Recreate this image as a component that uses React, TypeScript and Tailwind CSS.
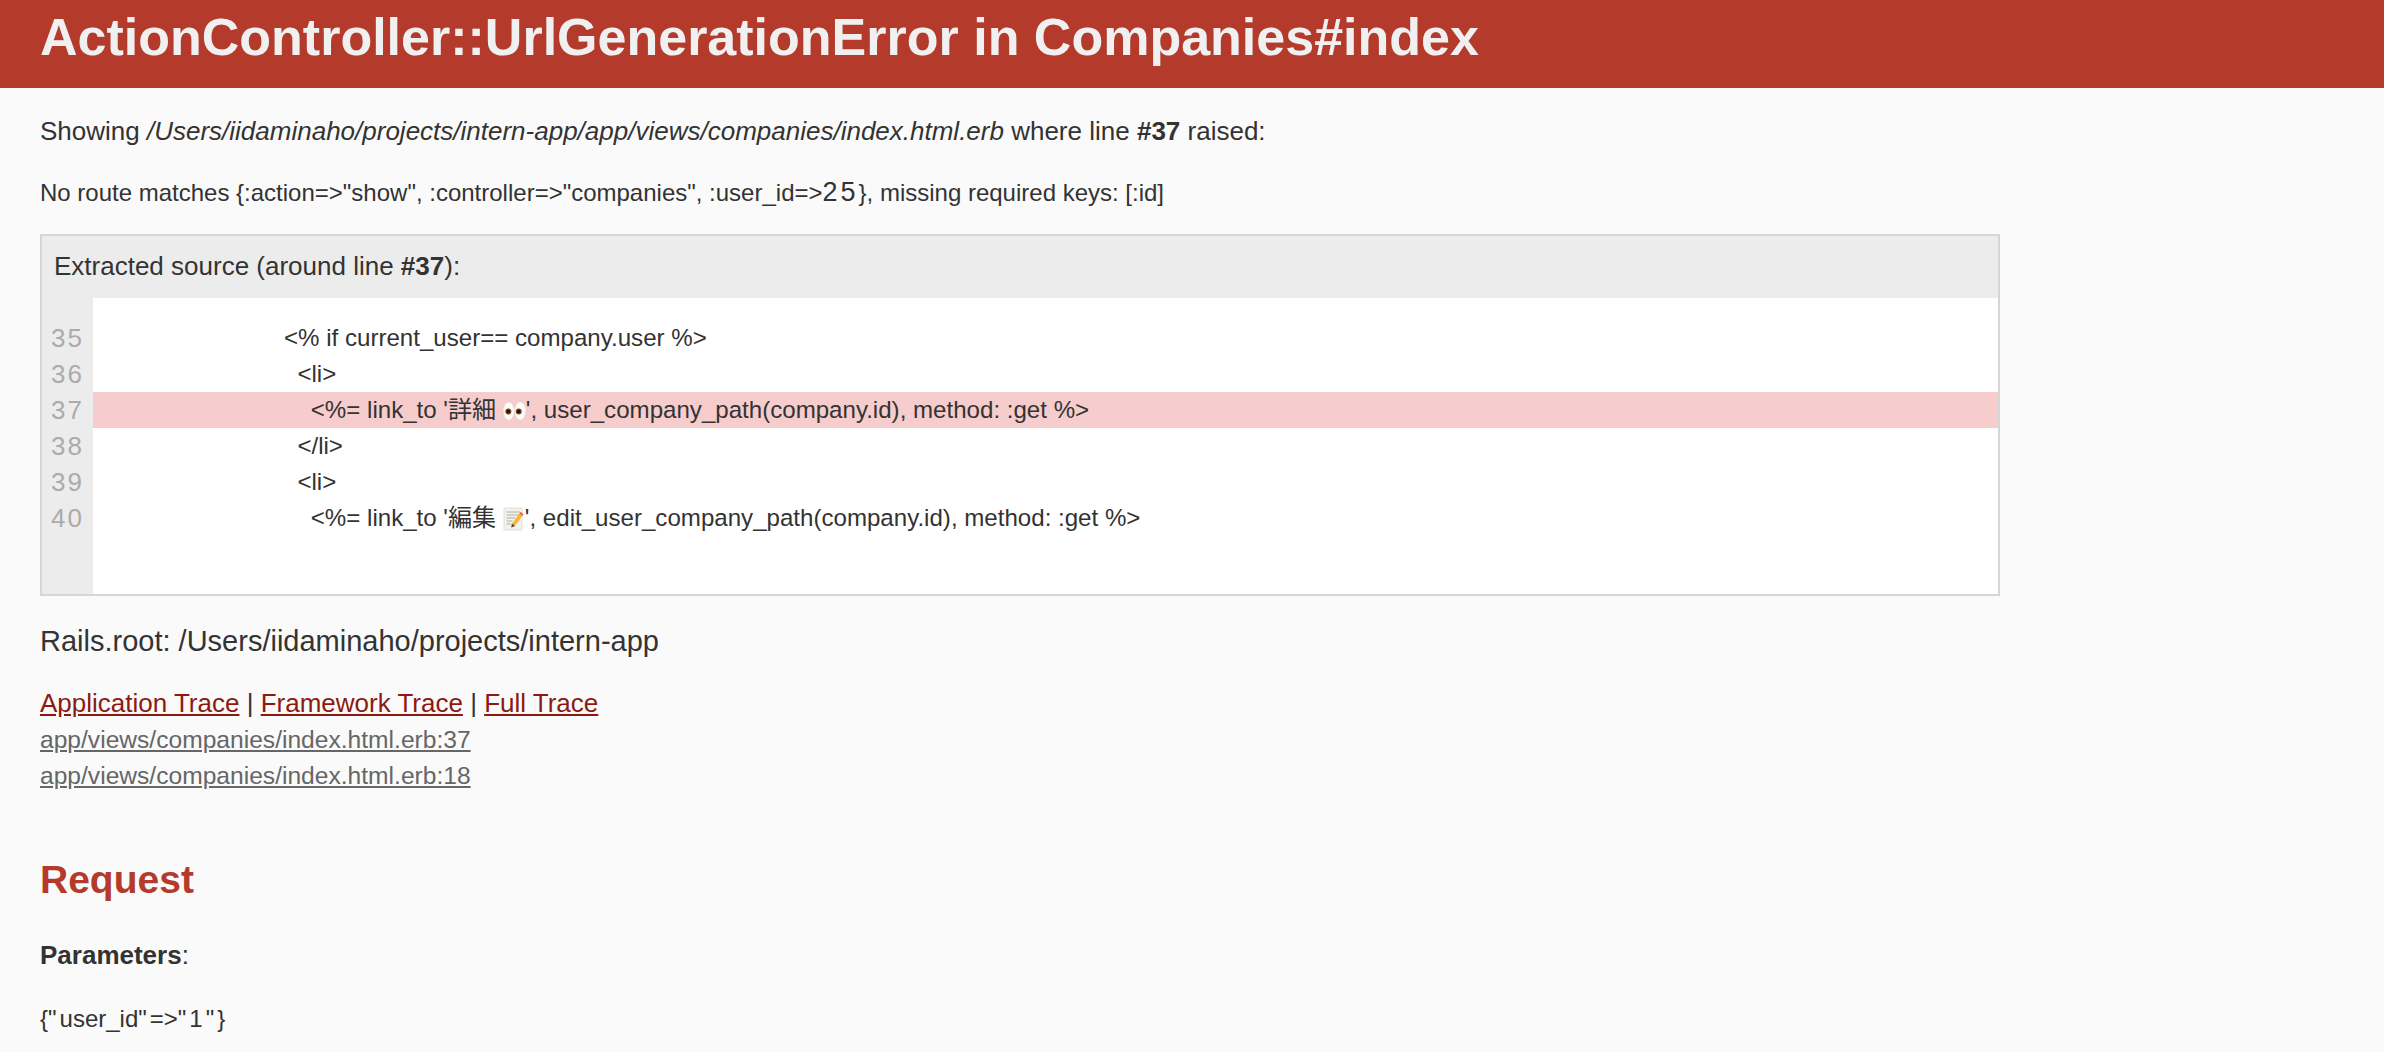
const sans = "font-['Liberation_Sans','Noto_Sans_CJK_JP',sans-serif]";

function EyesIcon() {
  return (
    <svg viewBox="0 0 24 20" className="inline-block w-[23px] h-[20px] align-[-3px]">
      <ellipse cx="6" cy="10" rx="5.7" ry="9.4" fill="#fbfbf9" stroke="#e0ded9" strokeWidth="0.5" />
      <ellipse cx="18" cy="10" rx="5.7" ry="9.4" fill="#fbfbf9" stroke="#e0ded9" strokeWidth="0.5" />
      <circle cx="5.6" cy="10.5" r="3.1" fill="#7a4516" />
      <circle cx="16.4" cy="10.5" r="3.1" fill="#7a4516" />
      <circle cx="5.6" cy="10.5" r="1.7" fill="#1d1009" />
      <circle cx="16.4" cy="10.5" r="1.7" fill="#1d1009" />
    </svg>
  );
}

function MemoIcon() {
  return (
    <svg viewBox="0 0 22 24" className="inline-block w-[22px] h-[24px] align-[-5px]">
      <rect x="1" y="1" width="18" height="22" fill="#f3f1ea" stroke="#d2cfc8" strokeWidth="0.6" />
      <path d="M3.5 5h13M3.5 8h13M3.5 11h9M3.5 14h6M3.5 17h5" stroke="#a9a9a9" strokeWidth="0.9" />
      <path d="M17.5 5l3 2.2L12 19l-3-2.2z" fill="#f5b82e" />
      <path d="M17.5 5l3 2.2-1.2 1.6-3-2.2z" fill="#e0695c" />
      <path d="M9 16.8l3 2.2-3.8 1.6z" fill="#4a3a2a" />
    </svg>
  );
}

const lines: { n: number; code: React.ReactNode; on?: boolean }[] = [
  { n: 35, code: "<% if current_user== company.user %>" },
  { n: 36, code: "  <li>" },
  {
    n: 37,
    on: true,
    code: (
      <>
        {"    <%= link_to '詳細 "}
        <EyesIcon />
        {"', user_company_path(company.id), method: :get %>"}
      </>
    ),
  },
  { n: 38, code: "  </li>" },
  { n: 39, code: "  <li>" },
  {
    n: 40,
    code: (
      <>
        {"    <%= link_to '編集 "}
        <MemoIcon />
        {"', edit_user_company_path(company.id), method: :get %>"}
      </>
    ),
  },
];

export default function App() {
  return (
    <div className={`${sans} min-h-screen h-[1052px] overflow-hidden bg-[#fafafa] text-[#333333]`}>
      <header className="h-[88px] bg-[#b43b2c] px-[40px] flex items-start">
        <h1 className="text-[52px] leading-[75px] font-bold text-[#f0f0f0]">
          ActionController::UrlGenerationError in Companies#index
        </h1>
      </header>

      <main className="px-[40px]">
        <p className="mt-[27px] text-[26px] leading-[32px]">
          Showing <i>/Users/iidaminaho/projects/intern-app/app/views/companies/index.html.erb</i> where line{" "}
          <b>#37</b> raised:
        </p>
        <p className="mt-[30px] text-[24px] leading-[32px] whitespace-pre">
          {'No route matches {:action=>"show", :controller=>"companies", :user_id=>'}
          <span className="text-[27px] leading-[24px] tracking-[3px]">25</span>
          {'}, missing required keys: [:id]'}
        </p>

        <section className="mt-[25px] w-[1960px] h-[362px] border-2 border-[#d6d6d6] flex flex-col">
          <div className="h-[62px] shrink-0 bg-[#ececec] px-[12px] text-[26px] leading-[60px]">
            Extracted source (around line <b>#37</b>):
          </div>
          <div className="flex-1 flex bg-white">
            <div className="w-[51px] shrink-0 bg-[#ececec] pt-[22px] pr-[9px] text-right text-[26px] leading-[36px] tracking-[2px] text-[#ababab]">
              {lines.map((l) => (
                <div key={l.n}>{l.n}</div>
              ))}
            </div>
            <div className="flex-1 pt-[22px] text-[24.1px] leading-[36px]">
              {lines.map((l) => (
                <div key={l.n} className={`pl-[191px] whitespace-pre h-[36px] ${l.on ? "bg-[#f7cccc]" : ""}`}>
                  {l.code}
                </div>
              ))}
            </div>
          </div>
        </section>

        <p className="mt-[27px] text-[29px] leading-[36px]">Rails.root: /Users/iidaminaho/projects/intern-app</p>

        <div className="mt-[26px] text-[26px] leading-[36px]">
          <a className="underline text-[#8c1a10]" href="#">Application Trace</a>
          {" | "}
          <a className="underline text-[#8c1a10]" href="#">Framework Trace</a>
          {" | "}
          <a className="underline text-[#8c1a10]" href="#">Full Trace</a>
        </div>
        <div className="mt-[1px] text-[24.6px] leading-[36px] text-[#666666]">
          <div><a className="underline" href="#">app/views/companies/index.html.erb:37</a></div>
          <div><a className="underline" href="#">app/views/companies/index.html.erb:18</a></div>
        </div>

        <h2 className="mt-[62px] text-[39px] leading-[48px] font-bold text-[#b43b2c]">Request</h2>
        <p className="mt-[35px] text-[26px] leading-[32px]"><b>Parameters</b>:</p>
        <pre className={`${sans} mt-[32px] text-[24px] leading-[32px]`}>
          {'{'}
          <span className="tracking-[3px]">{'"'}</span>
          {'user_id'}
          <span className="tracking-[3px]">{'"'}</span>
          {'=>'}
          <span className="tracking-[3px]">{'"1"'}</span>
          {'}'}
        </pre>
      </main>
    </div>
  );
}
